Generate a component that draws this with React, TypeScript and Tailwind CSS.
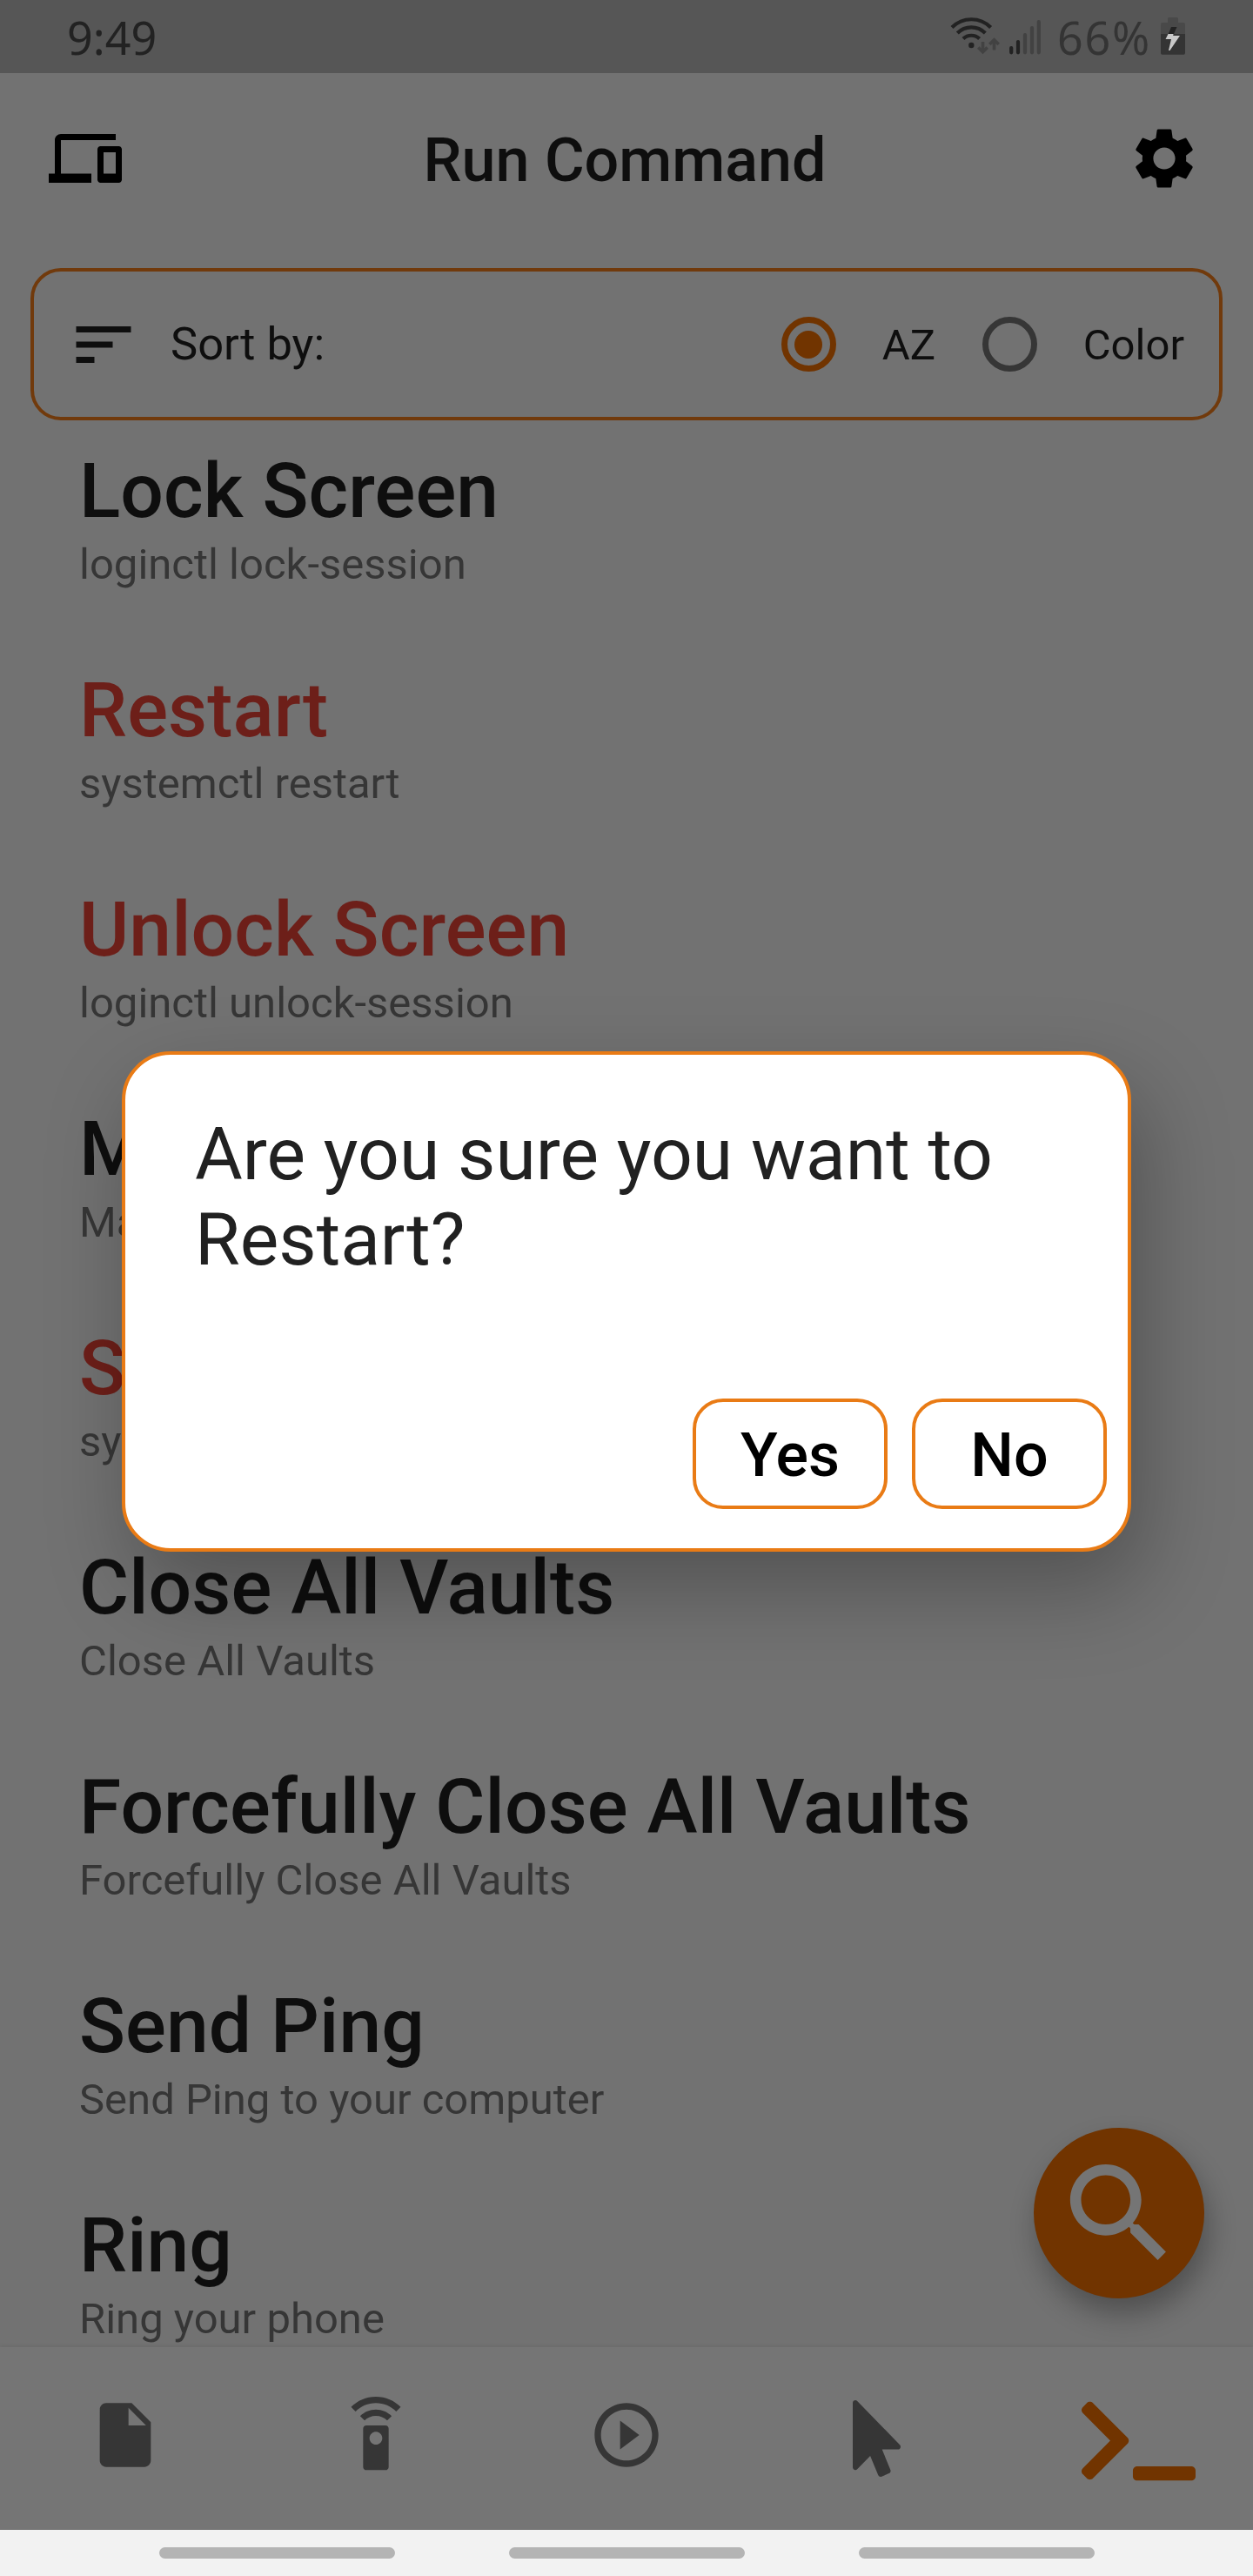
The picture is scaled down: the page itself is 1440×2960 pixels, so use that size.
import React from "react";

const commands = [
  { name: "Lock Screen", detail: "loginctl lock-session", danger: false },
  { name: "Restart", detail: "systemctl restart", danger: true },
  { name: "Unlock Screen", detail: "loginctl unlock-session", danger: true },
  { name: "M", detail: "Ma", danger: false },
  { name: "S", detail: "sy", danger: true },
  { name: "Close All Vaults", detail: "Close All Vaults", danger: false },
  { name: "Forcefully Close All Vaults", detail: "Forcefully Close All Vaults", danger: false },
  { name: "Send Ping", detail: "Send Ping to your computer", danger: false },
  { name: "Ring", detail: "Ring your phone", danger: false },
];

function StatusIcons() {
  return (
    <svg width="110" height="84" viewBox="1090 0 110 84" fill="none">
      <g stroke="#222222" strokeWidth="4.2">
        <path d="M1094 31.500a31.500 31.500 0 0 1 44.600 0" />
        <path d="M1100.300 38a22.600 22.600 0 0 1 32 0" />
        <path d="M1107 44.600a13.200 13.200 0 0 1 18.600 0" />
      </g>
      <circle cx="1116.300" cy="52" r="3.200" fill="#222222" />
      <g stroke="#424242" strokeWidth="3.600">
        <path d="M1129.500 48v12M1124.300 54.500l5.200 5.200 5.200-5.200" />
        <path d="M1142.500 57.500v-12M1137.300 51l5.200-5.200 5.200 5.200" />
      </g>
      <g strokeWidth="4.200" strokeLinecap="round">
        <path stroke="#222222" d="M1162.200 55v5.300M1170 48v12.300" />
        <path stroke="#424242" d="M1178 40v20.300M1186 32v28.300M1193.800 25v35.300" />
      </g>
    </svg>
  );
}

function Battery() {
  return (
    <svg width="28" height="84" viewBox="0 0 28 84">
      <path fill="#494949" d="M8 21.500q0-1.500 1.500-1.500h9q1.500 0 1.500 1.500V26h6q2 0 2 2v11H0V28q0-2 2-2h6z" />
      <path fill="#343434" d="M0 39h28v22q0 1.700-1.700 1.700H1.700Q0 62.700 0 61z" />
      <path fill="#232323" d="M12 31h6.500L15 39H8.800z" />
      <path fill="#c9c9c9" d="M8.500 39h6l-.3 2H22L10.500 58 9 58l3-13H5.500z" />
    </svg>
  );
}

function MaterialIcon({ d, size, className = "" }: { d: string; size: number; className?: string }) {
  return (
    <svg width={size} height={size} viewBox="0 0 24 24" fill="currentColor" className={className}>
      <path d={d} />
    </svg>
  );
}

const DEVICES =
  "M4 6h18V4H4c-1.100 0-2 .9-2 2v11H0v3h14v-3H4V6zm19 2h-6c-.55 0-1 .45-1 1v10c0 .55.45 1 1 1h6c.55 0 1-.45 1-1V9c0-.55-.45-1-1-1zm-1 9h-4v-7h4v7z";
const SETTINGS =
  "M19.140 12.940c.04-.3.060-.61.060-.94 0-.32-.02-.64-.07-.94l2.030-1.580c.18-.14.230-.41.120-.61l-1.920-3.320c-.12-.22-.37-.29-.59-.22l-2.390.96c-.5-.38-1.030-.7-1.620-.94l-.36-2.540c-.04-.24-.24-.41-.48-.41h-3.840c-.24 0-.43.17-.47.41l-.36 2.540c-.59.240-1.130.57-1.620.94l-2.390-.96c-.22-.08-.47 0-.59.22L2.740 8.870c-.12.21-.08.470.120.610l2.030 1.580c-.05.3-.09.630-.09.940s.020.640.070.940l-2.030 1.580c-.18.140-.23.410-.12.610l1.920 3.320c.12.220.370.290.590.220l2.390-.96c.5.380 1.030.7 1.620.94l.36 2.540c.05.240.240.410.480.410h3.840c.24 0 .44-.17.470-.41l.36-2.540c.59-.24 1.130-.56 1.620-.94l2.390.96c.22.080.470 0 .59-.22l1.920-3.320c.12-.22.070-.47-.12-.61l-2.010-1.580zM12 15.600c-1.980 0-3.600-1.620-3.600-3.600s1.620-3.600 3.600-3.600 3.600 1.620 3.600 3.600-1.620 3.600-3.600 3.600z";
const SORT = "M3 18h6v-2H3v2zM3 6v2h18V6H3zm0 7h12v-2H3v2z";
const SEARCH =
  "M15.500 14h-.79l-.28-.27C15.410 12.590 16 11.110 16 9.500 16 5.910 13.090 3 9.500 3S3 5.910 3 9.500 5.910 16 9.500 16c1.610 0 3.090-.59 4.230-1.570l.27.28v.79l5 4.990L20.490 19l-4.990-5zm-6 0C7.010 14 5 11.990 5 9.500S7.010 5 9.500 5 14 7.010 14 9.500 11.990 14 9.500 14z";
const FILE =
  "M6 2c-1.100 0-1.990.9-1.990 2L4 20c0 1.100.89 2 1.990 2H18c1.100 0 2-.9 2-2V8l-6-6H6zm7 7V3.500L18.500 9H13z";
const REMOTE =
  "M15 9H9c-.55 0-1 .45-1 1v12c0 .55.45 1 1 1h6c.55 0 1-.45 1-1V10c0-.55-.45-1-1-1zm-3 6c-1.100 0-2-.9-2-2s.9-2 2-2 2 .9 2 2-.9 2-2 2zM7.050 6.050l1.410 1.410C9.370 6.560 10.620 6 12 6s2.630.56 3.540 1.460l1.410-1.410C15.680 4.780 13.930 4 12 4s-3.680.78-4.950 2.050zM12 0C8.960 0 6.210 1.230 4.220 3.220l1.410 1.410C7.260 3.010 9.510 2 12 2s4.740 1.010 6.360 2.640l1.410-1.410C17.790 1.230 15.040 0 12 0z";
const PLAY =
  "M10 16.500l6-4.500-6-4.500v9zM12 2C6.480 2 2 6.480 2 12s4.480 10 10 10 10-4.480 10-10S17.520 2 12 2zm0 18c-4.410 0-8-3.590-8-8s3.590-8 8-8 8 3.590 8 8-3.590 8-8 8z";

function Radio({ checked }: { checked: boolean }) {
  return (
    <span
      className={
        checked
          ? "flex size-[63px] items-center justify-center rounded-full border-[7px] border-[#713400]"
          : "flex size-[63px] items-center justify-center rounded-full border-[7px] border-[#363636]"
      }
    >
      {checked && <span className="size-8 rounded-full bg-[#713400]" />}
    </span>
  );
}

export default function App() {
  return (
    <div className="relative flex h-[2960px] w-[1440px] flex-col overflow-hidden bg-[#727272] font-['Roboto',sans-serif] text-[#0e0e0e]">
      <header className="flex h-[84px] shrink-0 items-center justify-between bg-[#565656] pr-[78px] pl-[77px] font-['Noto_Sans',sans-serif] text-[52px] leading-[84px]">
        <span className="pt-px text-[#222222]">9:49</span>
        <div className="flex items-center">
          <StatusIcons />
          <span className="w-[119px] pt-px pl-[15px] tracking-[1.8px] text-[#343434]">66%</span>
          <span className="ml-[15px]">
            <Battery />
          </span>
        </div>
      </header>

      <div className="flex h-[196px] shrink-0 items-center justify-between pr-[60px] pl-14">
        <MaterialIcon d={DEVICES} size={84} className="text-black" />
        <h1 className="pt-[3px] text-[70px] leading-[82px] font-medium">Run Command</h1>
        <MaterialIcon d={SETTINGS} size={84} className="text-black" />
      </div>

      <section className="mx-[35px] mt-7 flex h-[175px] shrink-0 items-center rounded-[35px] border-4 border-[#713a0c]">
        <MaterialIcon d={SORT} size={84} className="ml-[38px]" />
        <span className="ml-[35px] pb-px text-[52.5px] leading-[62px]">Sort by:</span>
        <div className="ml-auto flex items-center text-[49px] leading-[58px]">
          <Radio checked />
          <span className="ml-[53px] w-[60px] pt-[3px]">AZ</span>
          <span className="ml-[55px]">
            <Radio checked={false} />
          </span>
          <span className="mr-10 ml-[53px] pt-[3px]">Color</span>
        </div>
      </section>

      <ul className="flex h-[2214px] shrink-0 flex-col overflow-hidden pt-[30px]">
        {commands.map((c) => (
          <li key={c.name} className="flex h-[252px] shrink-0 flex-col pl-[91px]">
            <span
              className={
                c.danger
                  ? "text-[87.5px] leading-[103px] font-medium tracking-[0.09px] text-[#6d1f19]"
                  : "text-[87.5px] leading-[103px] font-medium tracking-[0.09px]"
              }
            >
              {c.name}
            </span>
            <span className="mt-1 text-[49px] leading-[58px] text-[#363636]">{c.detail}</span>
          </li>
        ))}
      </ul>

      <nav className="grid h-[210px] shrink-0 grid-cols-5 bg-[#757575] text-[#363636] shadow-[0_-2px_4px_rgba(0,0,0,0.06)]">
        <span className="flex justify-center pt-[57px]">
          <MaterialIcon d={FILE} size={88} />
        </span>
        <span className="flex justify-center pt-[57px]">
          <MaterialIcon d={REMOTE} size={88} />
        </span>
        <span className="flex justify-center pt-[57px]">
          <MaterialIcon d={PLAY} size={88} />
        </span>
        <span className="flex pt-[61px] pl-[116px]">
          <svg width="55" height="88" viewBox="0 0 320 512" fill="currentColor">
            <path d="M302.189 329.126H196.105l55.831 135.993c3.889 9.428-.555 19.999-9.444 23.999l-49.165 21.427c-9.165 4-19.443-.571-23.332-9.714l-53.053-129.136-86.664 89.138C18.729 472.710 0 463.554 0 447.977V18.299C0 1.899 19.921-6.096 30.277 5.443l284.412 292.542c11.472 11.179 3.007 31.141-12.500 31.141z" />
          </svg>
        </span>
        <span className="flex pt-[55px] pl-[91px] text-[#713400]">
          <svg width="131" height="105" viewBox="0 0 640 512" fill="currentColor">
            <path d="M257.981 272.971L63.638 467.314c-9.373 9.373-24.569 9.373-33.941 0L7.029 444.647c-9.357-9.357-9.375-24.522-.04-33.901L161.011 256 6.990 101.255c-9.335-9.379-9.317-24.544.04-33.901l22.667-22.667c9.373-9.373 24.569-9.373 33.941 0L257.981 239.030c9.373 9.372 9.373 24.568 0 33.941zM640 456v-32c0-13.255-10.745-24-24-24H312c-13.255 0-24 10.745-24 24v32c0 13.255 10.745 24 24 24h304c13.255 0 24-10.745 24-24z" />
          </svg>
        </span>
      </nav>

      <footer className="flex h-[53px] shrink-0 items-center justify-center gap-[131px] bg-[#f2f2f2]">
        <span className="h-[13px] w-[271px] rounded-full bg-[#b4b4b4]" />
        <span className="h-[13px] w-[271px] rounded-full bg-[#b4b4b4]" />
        <span className="h-[13px] w-[271px] rounded-full bg-[#b4b4b4]" />
      </footer>

      <button className="absolute top-[2445px] left-[1188px] flex size-[196px] items-center justify-center rounded-full bg-[#713400] text-[#757575] shadow-[5px_18px_32px_rgba(0,0,0,0.3)]">
        <MaterialIcon d={SEARCH} size={151} className="shrink-0" />
      </button>

      <div
        role="dialog"
        className="absolute top-[1208px] left-[140px] flex h-[575px] w-[1160px] flex-col justify-between rounded-[56px] border-4 border-[#e97b15] bg-white pt-[66px] pr-6 pb-[45px] pl-20 shadow-[14px_42px_100px_rgba(0,0,0,0.28)]"
      >
        <p className="text-[84px] leading-[98px] text-[#212121]">
          Are you sure you want to
          <br />
          Restart?
        </p>
        <div className="flex justify-end gap-7 text-[70px] font-medium text-black">
          <button className="h-[127px] w-56 rounded-[35px] border-4 border-[#e97b15] pt-[3px] leading-[116px]">Yes</button>
          <button className="h-[127px] w-56 rounded-[35px] border-4 border-[#e97b15] pt-[3px] leading-[116px]">No</button>
        </div>
      </div>
    </div>
  );
}
